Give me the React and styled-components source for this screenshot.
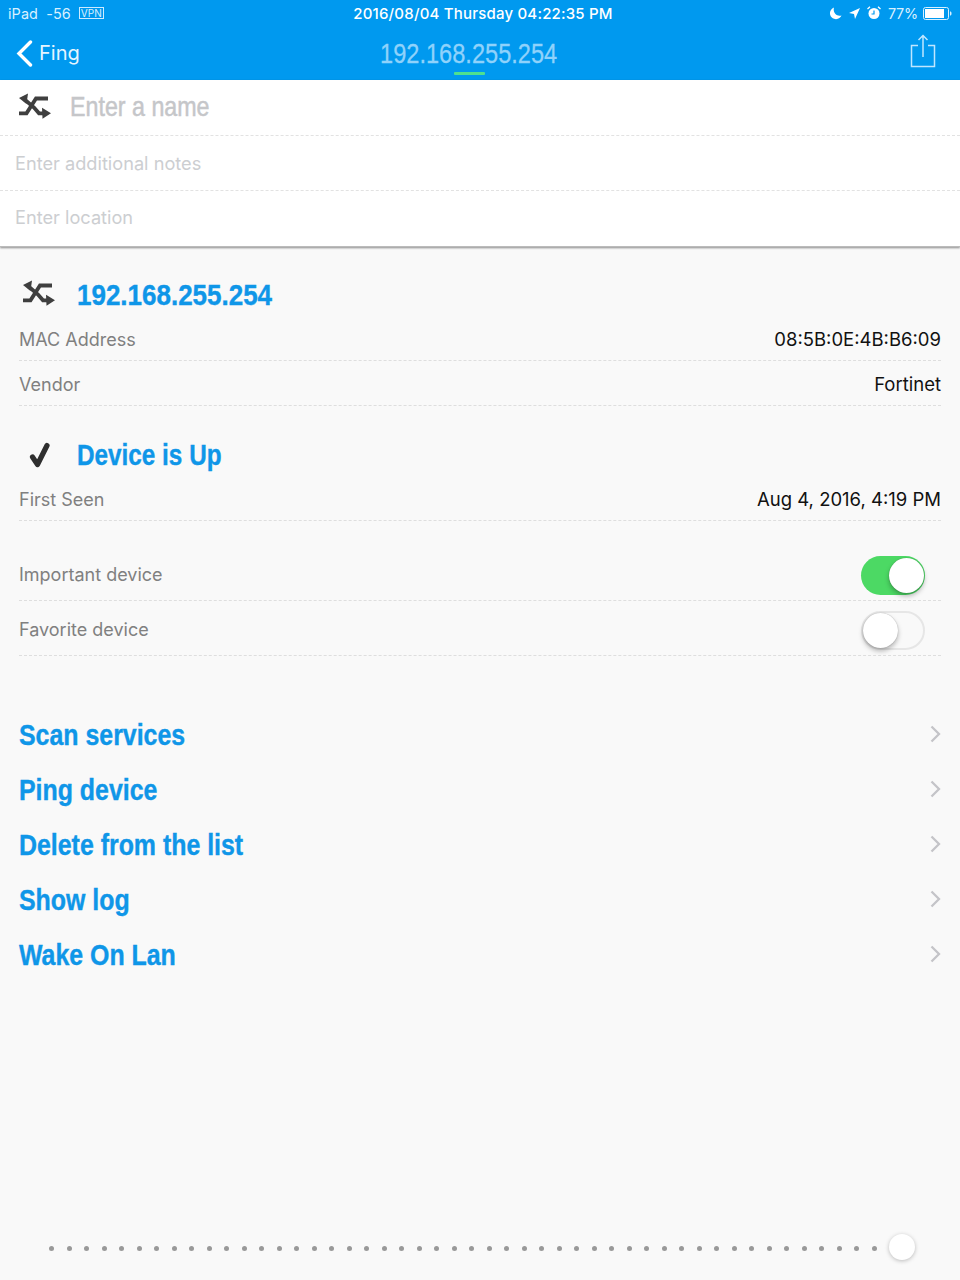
import React from "react";
import styled, { createGlobalStyle } from "styled-components";

const Global = createGlobalStyle`
  html, body { margin: 0; padding: 0; background: #f9f9f9; }
  * { box-sizing: border-box; }
`;
const BODY = `"Inter", "Liberation Sans", sans-serif`;
const HELV = `"Liberation Sans", Arial, sans-serif`;
const BLUE = "#0099ef";
const LINK = "#0f96e8";

const Page = styled.div`
  width: 960px; height: 1280px; display: flex; flex-direction: column;
  background: #f9f9f9; font-family: ${BODY}; overflow: hidden;
`;
const Header = styled.header`
  height: 80px; background: ${BLUE}; color: #fff; display: flex; flex-direction: column; flex: none;
`;
const StatusBar = styled.div`
  height: 26px; padding: 0 8px; display: grid; grid-template-columns: 1fr auto 1fr; align-items: center;
  font-size: 14.4px; letter-spacing: 0.1px;
`;
const StatusLeft = styled.div`
  display: flex; align-items: center; gap: 8px; color: #d8f0ff;
`;
const VpnTag = styled.span`
  font-size: 10px; line-height: 10px; border: 1px solid #cdebff; padding: 0 1px; color: #d8f0ff;
`;
const StatusCenter = styled.div`
  font-weight: 500; font-size: 15px; letter-spacing: 0.2px; margin-left: 6px;
`;
const StatusRight = styled.div`
  display: flex; justify-content: flex-end; align-items: center; gap: 7px; color: #d8f0ff;
`;
const Percent = styled.span`
  margin-right: -2px; letter-spacing: -0.2px;
`;
const NavBar = styled.div`
  flex: 1; display: grid; grid-template-columns: 1fr auto 1fr; align-items: center; padding: 0 24px 0 16px;
`;
const Back = styled.div`
  display: flex; align-items: center; gap: 6px; font-size: 20px; color: #e6f5ff;
`;
const NavTitle = styled.div`
  position: relative; width: 177px; height: 32px; margin: -1px 15px 0 0; text-align: left;
  &::after {
    content: ""; position: absolute; left: 74px; bottom: -6px; width: 31px; height: 3px;
    background: #4fe08f; border-radius: 1px;
  }
`;
const Condensed = styled.span`
  display: inline-block; white-space: nowrap; font-family: ${HELV};
  font-size: ${p => p.$size || 30}px; font-weight: ${p => p.$bold ? 700 : 400};
  color: ${p => p.$color}; line-height: 34px; margin-top: ${p => p.$mt || 0}px;
  -webkit-text-stroke: ${p => p.$stroke || 0.3}px ${p => p.$color};
  transform: scaleX(${p => p.$sx || 0.83}); transform-origin: left center;
`;
const NavRight = styled.div`
  display: flex; justify-content: flex-end; margin-top: -4px;
`;
const FormCard = styled.section`
  background: #fff; flex: none; height: 167px; box-shadow: 0 1px 2px rgba(0,0,0,.45);
  border-bottom: 1px solid #bbb;
`;
const FormRow = styled.div`
  height: ${p => p.$h || 55}px; display: flex; align-items: center; padding-left: ${p => p.$pad || 15}px; gap: 19px;
  border-bottom: ${p => p.$last ? "none" : "1px dashed #e2e2e2"};
`;
const NameIcon = styled.div`
  display: flex; margin-top: -3px;
`;
const Placeholder = styled.div`
  font-size: 18.2px; color: #ccced1; margin-top: ${p => p.$mt || 0}px;
`;
const Details = styled.section`
  padding: 21px 19px 0; display: flex; flex-direction: column;
`;
const SectionHead = styled.div`
  height: 54px; display: flex; align-items: center; gap: 19px; padding-left: 3px; margin-top: ${p => p.$mt || 0}px;
`;
const IconSlot = styled.div`
  width: 36px; display: flex; margin-top: ${p => p.$mt || 0}px;
  justify-content: ${p => p.$center ? "center" : "flex-start"};
`;
const Row = styled.div`
  height: ${p => p.$h || 45}px; display: flex; align-items: center; justify-content: space-between;
  border-bottom: 1px dashed #dedede; font-size: 18.5px;
  padding-top: ${p => p.$pt || 0}px; padding-bottom: ${p => p.$pb || 0}px;
`;
const Label = styled.span`color: #808080; font-size: 18px;`;
const Value = styled.span`color: #111;`;
const Track = styled.div`
  width: 64px; height: 39px; border-radius: 20px; position: relative; margin: 2px 16px 0 0;
  background: ${p => p.$on ? "#4cd964" : "#f9f9f9"};
  border: ${p => p.$on ? "none" : "2px solid #e6e6e6"};
`;
const Knob = styled.div`
  position: absolute; width: 35px; height: 35px; border-radius: 50%; background: #fff;
  top: ${p => p.$on ? "2px" : "0"}; ${p => p.$on ? "right: 1px;" : "left: 0;"}
  box-shadow: 0 3px 5px rgba(0,0,0,.28), 0 0 1px rgba(0,0,0,.35);
`;
const Actions = styled.nav`
  margin-top: 51px; padding: 0 19px; display: flex; flex-direction: column;
`;
const Action = styled.div`
  height: 55px; display: flex; align-items: center; justify-content: space-between;
`;
const ChevronWrap = styled.span`
  display: flex; margin-top: -2px;
`;
const Slider = styled.div`
  margin-top: auto; height: 66px; padding: 0 44px 0 49px; display: flex; align-items: center;
`;
const Dots = styled.div`
  display: flex; gap: 12.5px; flex: none; margin-top: 3px;
`;
const Dot = styled.i`
  width: 5px; height: 5px; border-radius: 50%; background: #999; display: block;
`;
const Thumb = styled.div`
  width: 26px; height: 26px; border-radius: 50%; background: #fff; margin-left: 12px;
  box-shadow: 0 1px 4px rgba(0,0,0,.25);
`;

const Shuffle = () => (
  <svg width="33" height="27" viewBox="5 3 33 27" fill="none" stroke="#3f3f3f" strokeWidth="3.8" strokeLinejoin="miter">
    <path d="M6 23.300h7.500L23 8.500h12" />
    <path d="M11 9l10 8.500 5 5.800h5" />
    <path d="M6 8l9-4.500-1.500 10.500z" fill="#3f3f3f" stroke="none" />
    <path d="M38 23.300l-9-5.500 .5 11z" fill="#3f3f3f" stroke="none" />
  </svg>
);
const Check = () => (
  <svg width="22" height="26" viewBox="0 0 22 26">
    <path d="M3.500 15l5 7.500L18 3.500" fill="none" stroke="#2f2f2f" strokeWidth="5.200" strokeLinecap="round" strokeLinejoin="round" />
  </svg>
);
const Chevron = () => (
  <svg width="11" height="18" viewBox="0 0 11 18">
    <path d="M1.500 1.500L9 9l-7.500 7.500" fill="none" stroke="#c4c4c8" strokeWidth="2.300" />
  </svg>
);
const BackIcon = () => (
  <svg width="17" height="27" viewBox="0 0 17 27">
    <path d="M14.500 2L3 13.500 14.500 25" fill="none" stroke="#fff" strokeWidth="3.400" strokeLinecap="round" />
  </svg>
);
const ShareIcon = () => (
  <svg width="26" height="34" viewBox="0 0 26 34" fill="none" stroke="#bfe6ff" strokeWidth="1.500">
    <path d="M8 11.500H1.500v21h23v-21H18" />
    <path d="M13 23V1.500M8.500 6L13 1.500 17.500 6" />
  </svg>
);
const Moon = () => (
  <svg width="13" height="13" viewBox="0 0 13 13"><path d="M5 .5a6 6 0 1 0 7.500 8C8 10 3.500 6 5 .5z" fill="#fff" /></svg>
);
const Arrow = () => (
  <svg width="11" height="11" viewBox="0 0 11 11"><path d="M11 0L6 11 5 6 0 5z" fill="#fff" /></svg>
);
const Alarm = () => (
  <svg width="14" height="14" viewBox="0 0 14 14">
    <circle cx="7" cy="7.500" r="5.500" fill="#fff" />
    <path d="M7 4.500v3.500H4.500" stroke={BLUE} strokeWidth="1.200" fill="none" />
    <path d="M.5 3L3 .8M13.500 3L11 .8" stroke="#fff" strokeWidth="1.300" />
  </svg>
);
const Battery = () => (
  <svg width="29" height="13" viewBox="0 0 29 13">
    <rect x=".5" y=".5" width="25" height="12" rx="2" fill="none" stroke="#d8f0ff" />
    <rect x="2" y="2" width="19" height="9" fill="#fff" />
    <path d="M27 4.500c1 0 1.500.5 1.500 2s-.5 2-1.500 2z" fill="#d8f0ff" />
  </svg>
);

const actions = ["Scan services", "Ping device", "Delete from the list", "Show log", "Wake On Lan"];

export default function App() {
  return (
    <Page>
      <Global />
      <Header>
        <StatusBar>
          <StatusLeft>
            <span>iPad&nbsp; -56</span>
            <VpnTag>VPN</VpnTag>
          </StatusLeft>
          <StatusCenter>2016/08/04 Thursday 04:22:35 PM</StatusCenter>
          <StatusRight>
            <Moon /><Arrow /><Alarm /><Percent>77%</Percent><Battery />
          </StatusRight>
        </StatusBar>
        <NavBar>
          <Back><BackIcon /><span>Fing</span></Back>
          <NavTitle><Condensed $size={28} $sx={0.843} $color="#8fd2fb">192.168.255.254</Condensed></NavTitle>
          <NavRight><ShareIcon /></NavRight>
        </NavBar>
      </Header>
      <FormCard>
        <FormRow $pad={18} $h={56}>
          <NameIcon><Shuffle /></NameIcon>
          <Condensed $size={28} $mt={-2} $stroke={0.5} $color="#c5c6c9">Enter a name</Condensed>
        </FormRow>
        <FormRow><Placeholder>Enter additional notes</Placeholder></FormRow>
        <FormRow $last $h={54}><Placeholder $mt={-2}>Enter location</Placeholder></FormRow>
      </FormCard>
      <Details>
        <SectionHead>
          <IconSlot $mt={-3}><Shuffle /></IconSlot>
          <Condensed $bold $sx={0.866} $stroke={0.4} $color={LINK}>192.168.255.254</Condensed>
        </SectionHead>
        <Row $h={39} $pb={4}><Label>MAC Address</Label><Value>08:5B:0E:4B:B6:09</Value></Row>
        <Row $pt={2}><Label>Vendor</Label><Value>Fortinet</Value></Row>
        <SectionHead $mt={22}>
          <IconSlot $center><Check /></IconSlot>
          <Condensed $bold $sx={0.81} $stroke={0.4} $color={LINK}>Device is Up</Condensed>
        </SectionHead>
        <Row $h={39} $pb={4}><Label>First Seen</Label><Value>Aug 4, 2016, 4:19 PM</Value></Row>
        <Row $h={80} $pt={27}><Label>Important device</Label><Track $on><Knob $on /></Track></Row>
        <Row $h={55} $pt={2}><Label>Favorite device</Label><Track><Knob /></Track></Row>
      </Details>
      <Actions>
        {actions.map(a => (
          <Action key={a}>
            <Condensed $bold $stroke={0.4} $color={LINK}>{a}</Condensed>
            <ChevronWrap><Chevron /></ChevronWrap>
          </Action>
        ))}
      </Actions>
      <Slider>
        <Dots>{Array.from({ length: 48 }, (_, i) => <Dot key={i} />)}</Dots>
        <Thumb />
      </Slider>
    </Page>
  );
}
